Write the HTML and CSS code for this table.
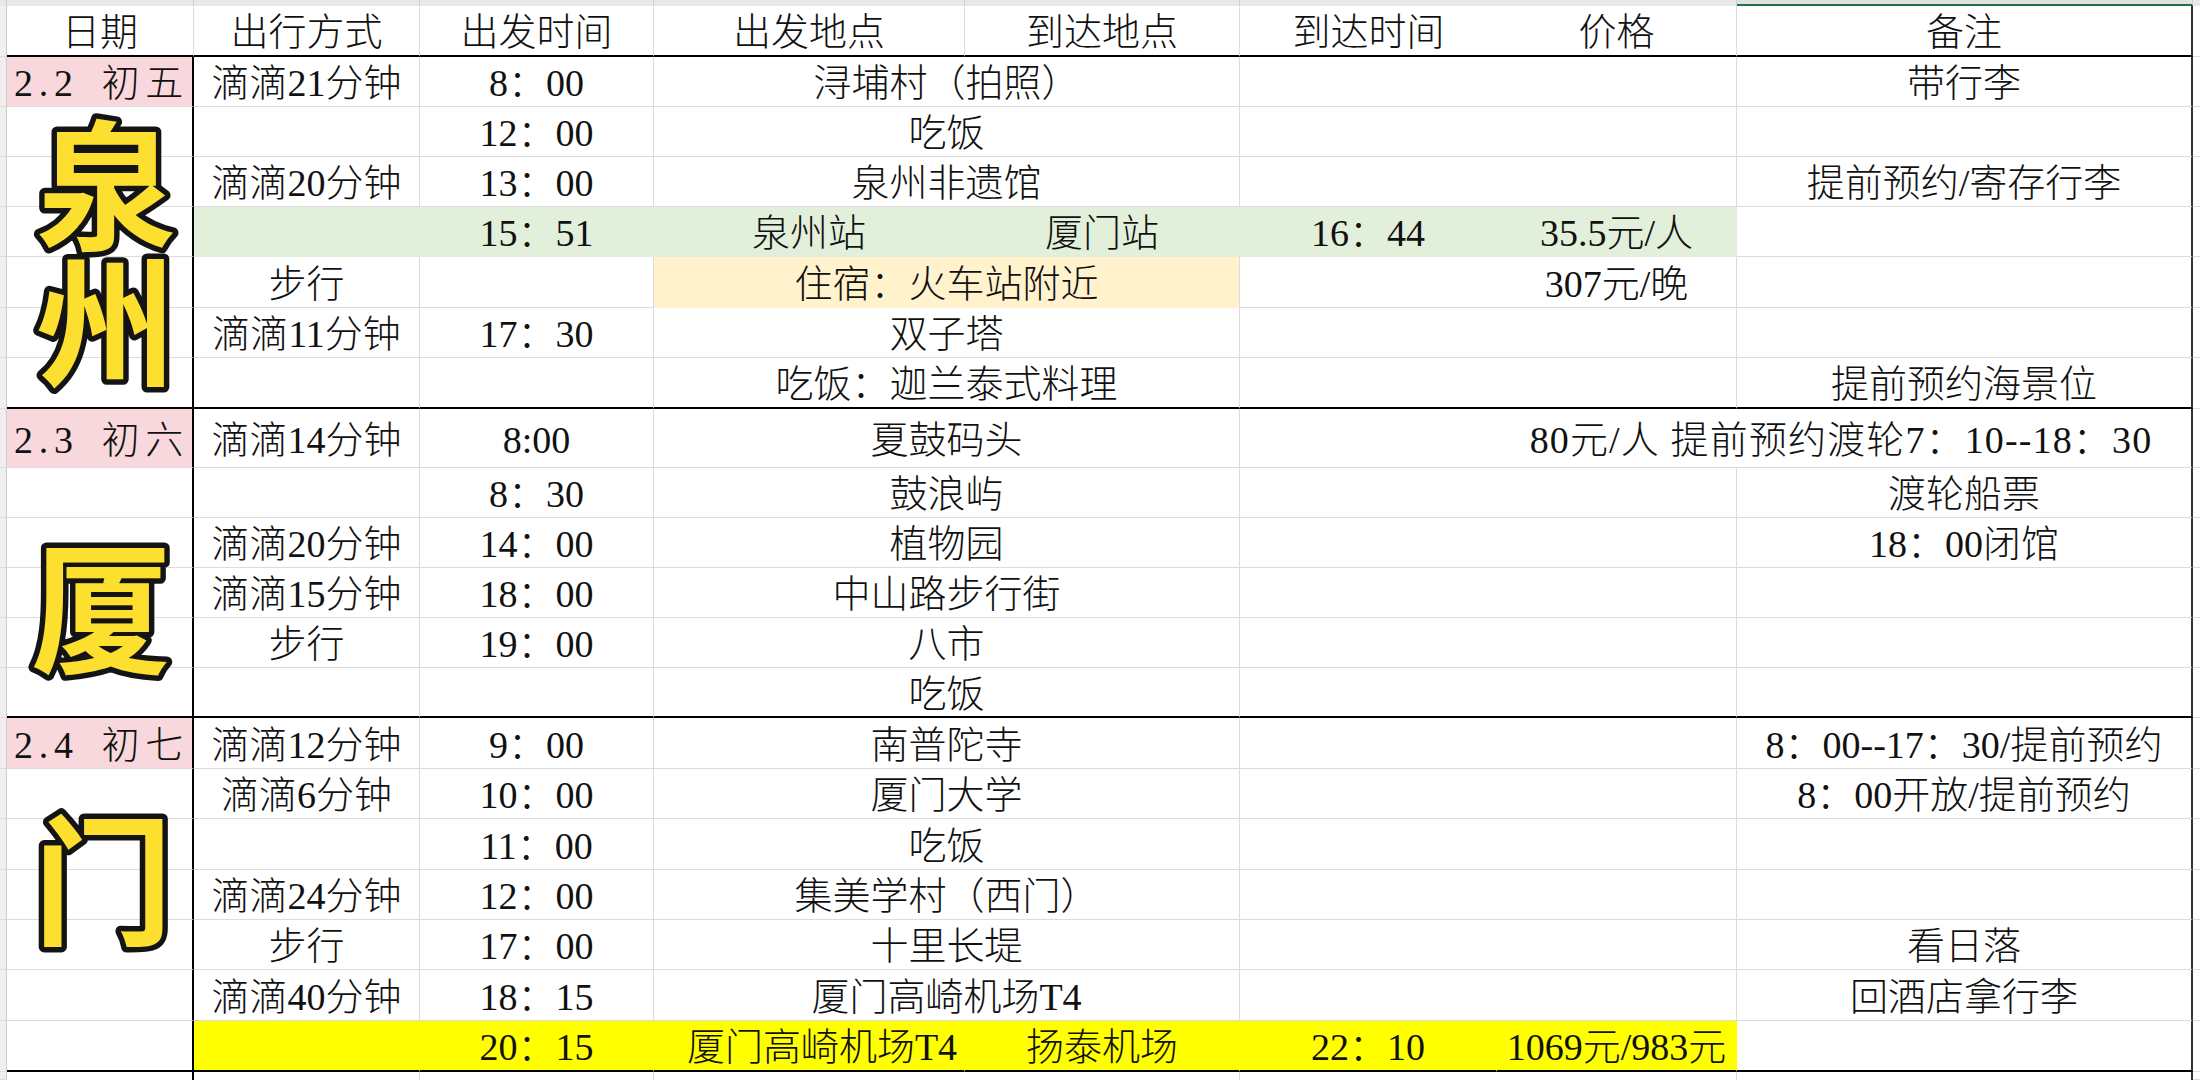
FILE: index.html
```html
<!DOCTYPE html>
<html lang="zh-CN">
<head>
<meta charset="utf-8">
<title>行程表</title>
<link rel="stylesheet" href="styles.css">
</head>
<body>
<div class="sheet">
  <div class="row strip">
    <div class="rh"></div><div class="s"></div><div class="s"></div><div class="s"></div><div class="s"></div><div class="s"></div><div class="s nb"></div><div class="s"></div><div class="s sel"></div><div class="rm"></div>
  </div>
  <div class="row hdr">
    <div class="rh"></div>
    <div class="c">日期</div>
    <div class="c">出行方式</div>
    <div class="c">出发时间</div>
    <div class="c">出发地点</div>
    <div class="c">到达地点</div>
    <div class="c nb">到达时间</div>
    <div class="c">价格</div>
    <div class="c last">备注</div>
    <div class="rm"></div>
  </div>

  <!-- Day 1 -->
  <div class="row">
    <div class="rh"></div>
    <div class="c d pink date">2.2 初五</div>
    <div class="c">滴滴21分钟</div>
    <div class="c">8：00</div>
    <div class="c span2">浔埔村（拍照）</div>
    <div class="c nb"></div>
    <div class="c"></div>
    <div class="c last">带行李</div>
    <div class="rm"></div>
  </div>
  <div class="row">
    <div class="rh"></div>
    <div class="c d"></div>
    <div class="c"></div>
    <div class="c">12：00</div>
    <div class="c span2">吃饭</div>
    <div class="c nb"></div>
    <div class="c"></div>
    <div class="c last"></div>
    <div class="rm"></div>
  </div>
  <div class="row">
    <div class="rh"></div>
    <div class="c d"></div>
    <div class="c">滴滴20分钟</div>
    <div class="c">13：00</div>
    <div class="c span2">泉州非遗馆</div>
    <div class="c nb"></div>
    <div class="c"></div>
    <div class="c last">提前预约/寄存行李</div>
    <div class="rm"></div>
  </div>
  <div class="row">
    <div class="rh"></div>
    <div class="c d"></div>
    <div class="c green"></div>
    <div class="c green">15：51</div>
    <div class="c green">泉州站</div>
    <div class="c green">厦门站</div>
    <div class="c green">16：44</div>
    <div class="c green">35.5元/人</div>
    <div class="c last"></div>
    <div class="rm"></div>
  </div>
  <div class="row h51">
    <div class="rh"></div>
    <div class="c d"></div>
    <div class="c">步行</div>
    <div class="c"></div>
    <div class="c span2 beige">住宿：火车站附近</div>
    <div class="c nb"></div>
    <div class="c">307元/晚</div>
    <div class="c last"></div>
    <div class="rm"></div>
  </div>
  <div class="row">
    <div class="rh"></div>
    <div class="c d"></div>
    <div class="c">滴滴11分钟</div>
    <div class="c">17：30</div>
    <div class="c span2">双子塔</div>
    <div class="c nb"></div>
    <div class="c"></div>
    <div class="c last"></div>
    <div class="rm"></div>
  </div>
  <div class="row h51 end">
    <div class="rh"></div>
    <div class="c d"></div>
    <div class="c"></div>
    <div class="c"></div>
    <div class="c span2">吃饭：迦兰泰式料理</div>
    <div class="c nb"></div>
    <div class="c"></div>
    <div class="c last">提前预约海景位</div>
    <div class="rm"></div>
  </div>

  <!-- Day 2 -->
  <div class="row h59">
    <div class="rh"></div>
    <div class="c d pink date">2.3 初六</div>
    <div class="c">滴滴14分钟</div>
    <div class="c">8:00</div>
    <div class="c span2">夏鼓码头</div>
    <div class="c nb"></div>
    <div class="c span2 last note">80元/人 提前预约渡轮7：10--18：30</div>
    <div class="rm"></div>
  </div>
  <div class="row">
    <div class="rh"></div>
    <div class="c d"></div>
    <div class="c"></div>
    <div class="c">8：30</div>
    <div class="c span2">鼓浪屿</div>
    <div class="c nb"></div>
    <div class="c"></div>
    <div class="c last">渡轮船票</div>
    <div class="rm"></div>
  </div>
  <div class="row">
    <div class="rh"></div>
    <div class="c d"></div>
    <div class="c">滴滴20分钟</div>
    <div class="c">14：00</div>
    <div class="c span2">植物园</div>
    <div class="c nb"></div>
    <div class="c"></div>
    <div class="c last">18：00闭馆</div>
    <div class="rm"></div>
  </div>
  <div class="row">
    <div class="rh"></div>
    <div class="c d"></div>
    <div class="c">滴滴15分钟</div>
    <div class="c">18：00</div>
    <div class="c span2">中山路步行街</div>
    <div class="c nb"></div>
    <div class="c"></div>
    <div class="c last"></div>
    <div class="rm"></div>
  </div>
  <div class="row">
    <div class="rh"></div>
    <div class="c d"></div>
    <div class="c">步行</div>
    <div class="c">19：00</div>
    <div class="c span2">八市</div>
    <div class="c nb"></div>
    <div class="c"></div>
    <div class="c last"></div>
    <div class="rm"></div>
  </div>
  <div class="row end">
    <div class="rh"></div>
    <div class="c d"></div>
    <div class="c"></div>
    <div class="c"></div>
    <div class="c span2">吃饭</div>
    <div class="c nb"></div>
    <div class="c"></div>
    <div class="c last"></div>
    <div class="rm"></div>
  </div>

  <!-- Day 3 -->
  <div class="row h51">
    <div class="rh"></div>
    <div class="c d pink date">2.4 初七</div>
    <div class="c">滴滴12分钟</div>
    <div class="c">9：00</div>
    <div class="c span2">南普陀寺</div>
    <div class="c nb"></div>
    <div class="c"></div>
    <div class="c last">8：00--17：30/提前预约</div>
    <div class="rm"></div>
  </div>
  <div class="row">
    <div class="rh"></div>
    <div class="c d"></div>
    <div class="c">滴滴6分钟</div>
    <div class="c">10：00</div>
    <div class="c span2">厦门大学</div>
    <div class="c nb"></div>
    <div class="c"></div>
    <div class="c last">8：00开放/提前预约</div>
    <div class="rm"></div>
  </div>
  <div class="row h51">
    <div class="rh"></div>
    <div class="c d"></div>
    <div class="c"></div>
    <div class="c">11：00</div>
    <div class="c span2">吃饭</div>
    <div class="c nb"></div>
    <div class="c"></div>
    <div class="c last"></div>
    <div class="rm"></div>
  </div>
  <div class="row">
    <div class="rh"></div>
    <div class="c d"></div>
    <div class="c">滴滴24分钟</div>
    <div class="c">12：00</div>
    <div class="c span2">集美学村（西门）</div>
    <div class="c nb"></div>
    <div class="c"></div>
    <div class="c last"></div>
    <div class="rm"></div>
  </div>
  <div class="row">
    <div class="rh"></div>
    <div class="c d"></div>
    <div class="c">步行</div>
    <div class="c">17：00</div>
    <div class="c span2">十里长堤</div>
    <div class="c nb"></div>
    <div class="c"></div>
    <div class="c last">看日落</div>
    <div class="rm"></div>
  </div>
  <div class="row h51">
    <div class="rh"></div>
    <div class="c d"></div>
    <div class="c">滴滴40分钟</div>
    <div class="c">18：15</div>
    <div class="c span2">厦门高崎机场T4</div>
    <div class="c nb"></div>
    <div class="c"></div>
    <div class="c last">回酒店拿行李</div>
    <div class="rm"></div>
  </div>
  <div class="row h51 end">
    <div class="rh"></div>
    <div class="c d"></div>
    <div class="c yellow"></div>
    <div class="c yellow">20：15</div>
    <div class="c yellow shift">厦门高崎机场T4</div>
    <div class="c yellow">扬泰机场</div>
    <div class="c yellow">22：10</div>
    <div class="c yellow">1069元/983元</div>
    <div class="c last"></div>
    <div class="rm"></div>
  </div>
  <div class="row tail">
    <div class="rh"></div>
    <div class="c d"></div>
    <div class="c"></div>
    <div class="c"></div>
    <div class="c span2"></div>
    <div class="c nb"></div>
    <div class="c"></div>
    <div class="c last"></div>
    <div class="rm"></div>
  </div>

  <svg class="stickers" width="2200" height="1080" viewBox="0 0 2200 1080" aria-hidden="true">
    <g class="big">
      <text class="v" x="106" y="116">泉州</text>
      <text x="101" y="662">厦</text>
      <text x="103" y="934">门</text>
    </g>
  </svg>
</div>
</body>
</html>
```

FILE: styles.css
```css
* {
  box-sizing: border-box;
  margin: 0;
  padding: 0;
}

html, body {
  background: #ffffff;
}

body {
  margin: 0;
  font-family: "Liberation Serif", "Noto Sans CJK SC", serif;
  font-size: 38px;
  font-weight: 300;
  color: #111111;
  overflow: hidden;
}

.sheet {
  position: relative;
  width: 2200px;
  height: 1080px;
  overflow: hidden;
}

.row {
  display: grid;
  grid-template-columns: 7px 187px 226px 234px 311px 275px 257px 240px 456px 7px;
  height: 50px;
}

.row.h51 { height: 51px; }
.row.h59 { height: 59px; }

.strip { height: 6px; }
.hdr { height: 51px; }
.tail { height: 8px; }

.rh {
  background: #efefef;
  border-right: 1px solid #cccccc;
  border-bottom: 1px solid #dcdcdc;
}

.rm {
  border-bottom: 1px solid #dcdcdc;
}

.s {
  background: #e8e8e8;
  border-right: 1px solid #d0d0d0;
}

.s.sel {
  border-bottom: 2px solid #217346;
  background: #e2e2e2;
}

.strip .rh, .strip .rm {
  background: #e8e8e8;
  border-bottom: none;
}

.c {
  display: flex;
  align-items: center;
  justify-content: center;
  white-space: nowrap;
  line-height: 1;
  padding-top: 3px;
  border-right: 1px solid #dcdcdc;
  border-bottom: 1px solid #dcdcdc;
}

.span2 { grid-column: span 2; }

.nb { border-right: none; }

.d { border-right: 2px solid #000000; }

.last { border-right: 2px solid #333333; }

.hdr .c { border-bottom: 2px solid #000000; }
.hdr .c.nb { border-right: none; }

.end .c { border-bottom: 2px solid #000000; }

.tail .c { border-bottom: none; }

.date {
  letter-spacing: 0.15em;
  word-spacing: 0.2em;
  padding-left: 4px;
}

.note {
  letter-spacing: 0.03em;
  padding-right: 6px;
}

.pink { background: #f8d8dc; }

.green {
  background: #e2efda;
  border-right-color: #e2efda;
  border-bottom-color: #e2efda;
}

.beige {
  background: #fff2cc;
  border-bottom-color: #fff2cc;
}

.yellow {
  background: #ffff00;
  border-right-color: #ffff00;
}

.shift { padding-left: 26px; }

.stickers {
  position: absolute;
  left: 0;
  top: 0;
  overflow: visible;
  pointer-events: none;
}

.big text {
  font-family: "Noto Sans CJK SC", sans-serif;
  font-weight: 700;
  font-size: 140px;
  text-anchor: middle;
  fill: #fde02f;
  stroke: #141414;
  stroke-width: 11px;
  stroke-linejoin: round;
  paint-order: stroke;
}

.big text.v {
  writing-mode: vertical-rl;
  text-anchor: start;
  letter-spacing: -3px;
}
```
